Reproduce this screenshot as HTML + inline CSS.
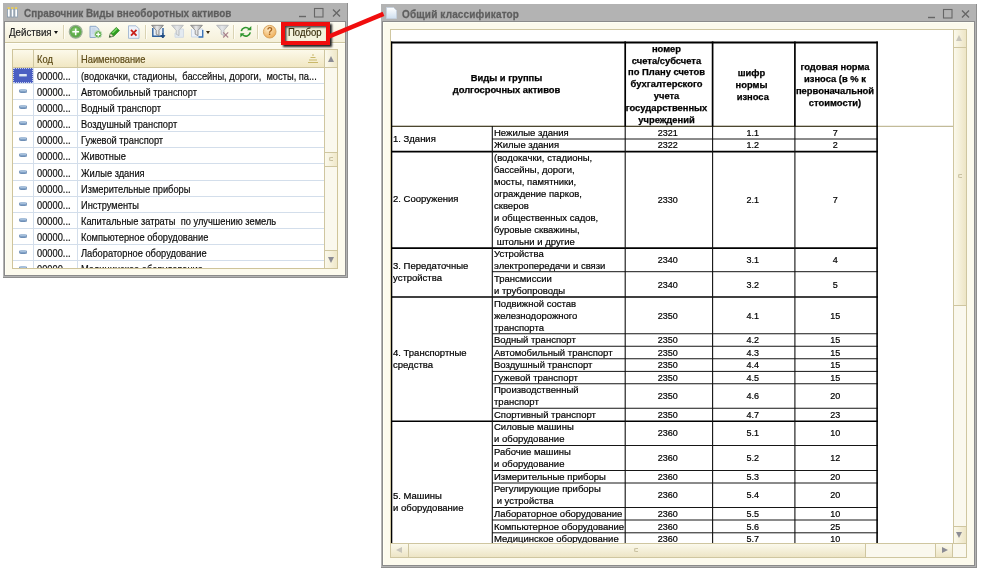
<!DOCTYPE html><html lang="ru"><head><meta charset="utf-8"><title>Общий классификатор</title><style>
*{box-sizing:border-box;margin:0;padding:0}
html,body{width:981px;height:571px;background:#fff;overflow:hidden}
body{position:relative;font-family:"Liberation Sans",sans-serif;font-size:9.3px;color:#000}
.a{position:absolute}
.title{position:absolute;color:#5e5e5e;-webkit-text-stroke:.25px #5e5e5e;font-weight:bold;white-space:nowrap}
.lr{position:absolute;left:0;width:311px;height:16px;border-bottom:1px solid #d3deeb;background:#fff}
.lr span{position:absolute;-webkit-text-stroke:.2px #000;top:1px;line-height:15px;white-space:pre;font-size:11px;color:#111;transform:scaleX(.845);transform-origin:0 50%}
.sx{-webkit-text-stroke:.2px currentColor;transform:scaleX(.845);transform-origin:0 50%;white-space:pre}
.ic{position:absolute;left:6px;top:5px;width:8px;height:4px;border-radius:2px;background:linear-gradient(#b9cfe6,#6f93bd);border:1px solid #6f8fb6;border-top-color:#a7bfda}
.rt{position:absolute;-webkit-text-stroke:.2px #000;font-size:9.5px;line-height:12px;white-space:pre;color:#000}
.hl{position:absolute;background:#222;height:1px}
.vl{position:absolute;background:#222;width:1px}
.hd{position:absolute;-webkit-text-stroke:.25px #000;font-weight:bold;font-size:9.4px;line-height:11.9px;text-align:center;white-space:pre;color:#000}
.num{position:absolute;-webkit-text-stroke:.2px #000;font-size:9px;line-height:12px;text-align:center;white-space:nowrap;color:#000}
.sep{position:absolute;width:1px;background:#dad3b3;top:25px;height:14px;box-shadow:1px 0 0 #fffdf4}
</style></head><body><div id="root" style="position:absolute;left:0;top:0;width:981px;height:571px;will-change:transform">
<div class="a" style="left:3px;top:3px;width:345px;height:275px;background:#b3b3b3;border-right:1px solid #8e8e8e;border-bottom:1px solid #8e8e8e"></div>
<div class="a" style="left:4px;top:21px;width:342px;height:254.500px;background:#fcfaed;border:1px solid #8b8b8b;box-shadow:inset 1px 1px 0 #fffff4"></div>
<svg class="a" style="left:7px;top:7px" width="11" height="11" viewBox="0 0 11 11"><rect x="0.5" y="2" width="2.6" height="8" fill="#fff" stroke="#7d93a8" stroke-width=".7"/><rect x="4.2" y="2" width="2.6" height="8" fill="#fff" stroke="#7d93a8" stroke-width=".7"/><rect x="7.9" y="2" width="2.6" height="8" fill="#fff" stroke="#7d93a8" stroke-width=".7"/><rect x="0.5" y="0.3" width="2.4" height="1.6" fill="#f6d24a"/><rect x="4.2" y="0.3" width="2.4" height="1.6" fill="#f6d24a"/><rect x="7.9" y="0.3" width="2.4" height="1.6" fill="#f6d24a"/></svg>
<div class="title" style="left:24px;top:4.500px;height:17px;line-height:17px;font-size:10px;transform:scale(.99,1.05);transform-origin:0 50%">Справочник Виды внеоборотных активов</div>
<svg class="a" style="left:296px;top:5px" width="48" height="15" viewBox="0 0 48 15"><path d="M3 11.5h7" stroke="#666" stroke-width="1.4" fill="none"/><rect x="18.5" y="3.5" width="8.5" height="8.5" fill="none" stroke="#666" stroke-width="1.1"/><path d="M37 4.5l7 7M44 4.5l-7 7" stroke="#666" stroke-width="1.3" fill="none"/></svg>
<div class="a" style="left:5px;top:22px;width:340px;height:21px;background:linear-gradient(#fdfcf2,#f5f0da);border-bottom:1px solid #cfc7a0;box-shadow:0 1px 0 #fffffa"></div>
<div class="a sx" style="left:9px;top:25px;line-height:14px;font-size:11.3px;color:#222;transform:scaleX(.86)">Действия</div>
<div class="a" style="left:54px;top:30.500px;width:0;height:0;border-left:2.500px solid transparent;border-right:2.500px solid transparent;border-top:3px solid #111"></div>
<div class="sep" style="left:63px"></div>
<div class="sep" style="left:145px"></div>
<div class="sep" style="left:233px"></div>
<div class="sep" style="left:257px"></div>
<svg class="a" width="0" height="0" style="left:0;top:0"><defs><linearGradient id="fg" x1="0" y1="0" x2="1" y2="0"><stop offset="0" stop-color="#8e8e8e"/><stop offset=".45" stop-color="#ececec"/><stop offset="1" stop-color="#9a9a9a"/></linearGradient><linearGradient id="fl" x1="0" y1="0" x2="1" y2="0"><stop offset="0" stop-color="#bfc3c7"/><stop offset=".45" stop-color="#e6e8ea"/><stop offset="1" stop-color="#c3c6c9"/></linearGradient><radialGradient id="gg" cx=".4" cy=".35" r=".75"><stop offset="0" stop-color="#8ccf76"/><stop offset="1" stop-color="#4f9f3b"/></radialGradient><radialGradient id="hg" cx=".4" cy=".3" r=".8"><stop offset="0" stop-color="#fdebc9"/><stop offset="1" stop-color="#eea648"/></radialGradient><linearGradient id="dg" x1="0" y1="0" x2="0" y2="1"><stop offset="0" stop-color="#fff"/><stop offset="1" stop-color="#cfdff0"/></linearGradient></defs></svg>
<svg class="a" style="left:68px;top:24px" width="16" height="16" viewBox="0 0 16 16"><circle cx="7.700" cy="7.800" r="6.400" fill="#62ab4e" stroke="#9caf98" stroke-width="1.200"/><circle cx="7.700" cy="7.800" r="4.600" fill="url(#gg)"/><path d="M7.700 4.400v6.800M4.300 7.800h6.800" stroke="#fff" stroke-width="1.500"/></svg>
<svg class="a" style="left:88px;top:24px" width="16" height="16" viewBox="0 0 16 16"><path d="M2 2.300h6l2.800 2.800v8.400H2z" fill="#d3e1f0" stroke="#8fa9c8" stroke-width="1"/><path d="M3.800 5h3.500M3.800 7h5M3.800 9h3" stroke="#b9c9dc" stroke-width=".8"/><circle cx="10.200" cy="10.300" r="3.700" fill="#63b04f" stroke="#cfe2ca" stroke-width="1"/><path d="M10.200 8.200v4.200M8.100 10.300h4.200" stroke="#fff" stroke-width="1.300"/></svg>
<svg class="a" style="left:108px;top:25px" width="14" height="14" viewBox="0 0 14 14"><path d="M1.300 12.200l1.200-4 5.800-5.800 3.100 3.100-5.800 5.800z" fill="#2f9e20" stroke="#1f7a14" stroke-width=".7"/><path d="M4 7.600l4.600-4.600.9.900-4.600 4.600z" fill="#7fdc68"/><path d="M1.300 12.200l1.200-4 2.900 2.900z" fill="#f3e6c4" stroke="#666" stroke-width=".5"/><path d="M1.300 12.200l.5-1.700 1.200 1.200z" fill="#222"/></svg>
<svg class="a" style="left:127px;top:24px" width="14" height="16" viewBox="0 0 14 16"><path d="M1.500 1.800h7.500l3 3v9.500h-10.500z" fill="#eef3fa" stroke="#a9bcd4" stroke-width="1"/><path d="M4 5.800l5.500 5.800M9.500 5.800l-5.500 5.800" stroke="#c9211a" stroke-width="1.800"/></svg>
<svg class="a" style="left:151px;top:24px" width="16" height="16" viewBox="0 0 16 16"><path d="M1.800 4V12.300H12V4" fill="#e9f0f8" stroke="#2d5f9c" stroke-width="1.400"/><path d="M.600 1.300H12.400L8 6.300V11.600L5.200 10.200V6.300Z" fill="url(#fg)" stroke="#777" stroke-width=".8"/><path d="M11.800 9v3M9.800 11.600h4l-2 2.400z" stroke="#1f4a80" stroke-width="1" fill="#1f4a80"/></svg>
<svg class="a" style="left:171px;top:24px" width="16" height="16" viewBox="0 0 16 16"><path d="M6 5h6.500v8.300H4V9" fill="#e3eaf1" stroke="#d3dbe4" stroke-width="1"/><path d="M.600 1.300H12.400L8 6.300V11.600L5.200 10.200V6.300Z" fill="url(#fl)" stroke="#b4b7ba" stroke-width=".8"/></svg>
<svg class="a" style="left:190px;top:24px" width="16" height="16" viewBox="0 0 16 16"><path d="M1.500 5V13H12.700V5H8" fill="#eef3f9" stroke="#c9d6e6" stroke-width="1"/><path d="M8.500 13H12.700V6" fill="none" stroke="#3c74b8" stroke-width="1.400"/><path d="M.600 1.300H12.400L8 6.300V11.600L5.200 10.200V6.300Z" fill="url(#fg)" stroke="#858585" stroke-width=".8"/></svg>
<div class="a" style="left:205.500px;top:30.500px;width:0;height:0;border-left:2.500px solid transparent;border-right:2.500px solid transparent;border-top:3px solid #3a2a10"></div>
<svg class="a" style="left:216px;top:24px" width="16" height="16" viewBox="0 0 16 16"><path d="M.600 1.300H12.400L8 6.300V11.600L5.200 10.200V6.300Z" fill="url(#fl)" stroke="#b0b3b6" stroke-width=".8"/><path d="M7.200 8.300l5 5.200M12.200 8.300l-5 5.200" stroke="#a8808a" stroke-width="1.100"/></svg>
<svg class="a" style="left:238px;top:24px" width="16" height="16" viewBox="0 0 16 16"><path d="M3.300 7.200a4.500 4.500 0 0 1 7.600-2.400" fill="none" stroke="#2f962f" stroke-width="1.600"/><path d="M12.300 8.400a4.500 4.500 0 0 1-7.600 2.400" fill="none" stroke="#2f962f" stroke-width="1.600"/><path d="M9 6.300h4.300v-4.300z" fill="#2f962f"/><path d="M6.600 9.300h-4.300v4.300z" fill="#2f962f"/></svg>
<svg class="a" style="left:262px;top:24px" width="16" height="16" viewBox="0 0 16 16"><circle cx="7.700" cy="7.700" r="6.300" fill="url(#hg)" stroke="#d9a45e" stroke-width="1"/><text x="7.700" y="11.200" font-family="Liberation Sans, sans-serif" font-weight="bold" font-size="10" text-anchor="middle" fill="#a8641c">?</text></svg>
<div class="a" style="left:281px;top:21.500px;width:49px;height:23.500px;border:4px solid #f00d0d;background:#f4f3dc;box-shadow:1.500px 1.500px 2px #222,inset 1.500px 1.500px 2px #444"></div>
<div class="a sx" style="left:288px;top:25px;line-height:14px;font-size:11.300px;color:#3a300f">Подбор</div>
<div class="a" style="left:12px;top:49px;width:326px;height:220px;background:#fff;border:1px solid #cfc49a;overflow:hidden">
<div class="a" style="left:0;top:0;width:311px;height:18px;background:linear-gradient(#fcf9ea,#f1e7c3);border-bottom:1px solid #cfc6a0"></div>
<div class="a" style="left:20px;top:0;width:1px;height:18px;background:#cfc6a0"></div>
<div class="a" style="left:64px;top:0;width:1px;height:18px;background:#cfc6a0"></div>
<div class="a sx" style="left:23.500px;top:1.500px;line-height:15px;font-size:11px;color:#5c4a16">Код</div>
<div class="a sx" style="left:68px;top:1.500px;line-height:15px;font-size:11px;color:#5c4a16">Наименование</div>
<svg class="a" style="left:294px;top:4px" width="12" height="10" viewBox="0 0 12 10"><path d="M5 1h2M3.500 3.500h5M2 6h8M1 8.500h10" stroke="#c9b86a" stroke-width="1"/></svg>
<div class="lr" style="top:18px">
<div class="a" style="left:0;top:0;width:20px;height:15px;background:#4b5fc2;outline:1px dotted #c8d0f0;outline-offset:-1px"></div><div class="ic" style="height:2px;top:6px;background:#dfe7f6;border:0;box-shadow:0 1px 0 #8a9ed0"></div>
<span style="left:24px">00000...</span><span style="left:68px">(водокачки, стадионы,  бассейны, дороги,  мосты, па...</span></div>
<div class="lr" style="top:34px">
<div class="ic"></div>
<span style="left:24px">00000...</span><span style="left:68px">Автомобильный транспорт</span></div>
<div class="lr" style="top:50px">
<div class="ic"></div>
<span style="left:24px">00000...</span><span style="left:68px">Водный транспорт</span></div>
<div class="lr" style="top:66px">
<div class="ic"></div>
<span style="left:24px">00000...</span><span style="left:68px">Воздушный транспорт</span></div>
<div class="lr" style="top:82px">
<div class="ic"></div>
<span style="left:24px">00000...</span><span style="left:68px">Гужевой транспорт</span></div>
<div class="lr" style="top:98px">
<div class="ic"></div>
<span style="left:24px">00000...</span><span style="left:68px">Животные</span></div>
<div class="lr" style="top:115px">
<div class="ic"></div>
<span style="left:24px">00000...</span><span style="left:68px">Жилые здания</span></div>
<div class="lr" style="top:131px">
<div class="ic"></div>
<span style="left:24px">00000...</span><span style="left:68px">Измерительные приборы</span></div>
<div class="lr" style="top:147px">
<div class="ic"></div>
<span style="left:24px">00000...</span><span style="left:68px">Инструменты</span></div>
<div class="lr" style="top:163px">
<div class="ic"></div>
<span style="left:24px">00000...</span><span style="left:68px">Капитальные затраты  по улучшению земель</span></div>
<div class="lr" style="top:179px">
<div class="ic"></div>
<span style="left:24px">00000...</span><span style="left:68px">Компьютерное оборудование</span></div>
<div class="lr" style="top:195px">
<div class="ic"></div>
<span style="left:24px">00000...</span><span style="left:68px">Лабораторное оборудование</span></div>
<div class="lr" style="top:211px">
<div class="ic"></div>
<span style="left:24px">00000...</span><span style="left:68px">Медицинское оборудование</span></div>
<div class="a" style="left:20px;top:18px;width:1px;height:202px;background:#d3deeb"></div>
<div class="a" style="left:64px;top:18px;width:1px;height:202px;background:#d3deeb"></div>
<div class="a" style="left:311px;top:0;width:14px;height:218px;background:#faf8ee;border-left:1px solid #cfc6a0"></div>
<div class="a" style="left:311px;top:0;width:14px;height:18px;background:linear-gradient(90deg,#fbf9ec,#eee6c6);border:1px solid #cfc6a0;border-top:0;border-right:0"></div>
<div class="a" style="left:315px;top:6px;width:0;height:0;border-left:3px solid transparent;border-right:3px solid transparent;border-bottom:6px solid #8c8c94"></div>
<div class="a" style="left:311px;top:102px;width:14px;height:15px;background:linear-gradient(90deg,#fbf9ec,#efe7c8);border:1px solid #cfc6a0;border-right:0"></div>
<div class="a" style="left:316px;top:107px;width:4px;height:4px;border:1px solid #c9c1a0;border-right:0;border-radius:2px 0 0 2px"></div>
<div class="a" style="left:311px;top:200px;width:14px;height:18px;background:linear-gradient(90deg,#fbf9ec,#eee6c6);border:1px solid #cfc6a0;border-right:0;border-bottom:0"></div>
<div class="a" style="left:315px;top:207px;width:0;height:0;border-left:3px solid transparent;border-right:3px solid transparent;border-top:6px solid #8c8c94"></div>
</div>
<div class="a" style="left:381px;top:4px;width:596px;height:564px;background:#b3b3b3;border-right:1px solid #8e8e8e;border-bottom:1px solid #8e8e8e"></div>
<div class="a" style="left:382px;top:21px;width:593px;height:545px;background:#fcfaed;border:1px solid #8b8b8b;border-left-width:1.500px;box-shadow:inset 1px 1px 0 #fffff4"></div>
<svg class="a" style="left:386px;top:7px" width="11" height="12" viewBox="0 0 11 12"><path d="M.500.500h7l3 3v8h-10z" fill="url(#dg)" stroke="#c4d0e0" stroke-width=".8"/></svg>
<div class="title" style="left:402px;top:5.500px;height:17px;line-height:17px;font-size:10px;letter-spacing:.15px;transform:scaleY(1.050)">Общий классификатор</div>
<svg class="a" style="left:925px;top:6px" width="48" height="15" viewBox="0 0 48 15"><path d="M3 11.500h7" stroke="#666" stroke-width="1.400" fill="none"/><rect x="18.500" y="3.500" width="8.500" height="8.500" fill="none" stroke="#666" stroke-width="1.100"/><path d="M37 4.500l7 7M44 4.500l-7 7" stroke="#666" stroke-width="1.300" fill="none"/></svg>
<div class="a" id="doc" style="left:390px;top:29px;width:564px;height:515px;background:#fff;border:1px solid #cfc6a0;border-right:0;border-bottom:0;overflow:hidden">
<svg class="a" style="left:0;top:0" width="563" height="514" viewBox="391 30 563 514"><path d="M391 126.300H954" stroke="#b3aa80" stroke-width="1"/><path d="M391.00 42.40H877.800" stroke="#000" stroke-width="2.0"/><path d="M391.00 126.30H877.800" stroke="#2e2a14" stroke-width="1.0"/><path d="M492.00 139.00H877.800" stroke="#161616" stroke-width="1.0"/><path d="M391.00 151.60H877.800" stroke="#000" stroke-width="1.6"/><path d="M391.00 248.10H877.800" stroke="#000" stroke-width="1.6"/><path d="M492.00 271.70H877.800" stroke="#161616" stroke-width="1.0"/><path d="M391.00 297.00H877.800" stroke="#000" stroke-width="1.6"/><path d="M492.00 333.75H877.800" stroke="#161616" stroke-width="1.0"/><path d="M492.00 346.25H877.800" stroke="#161616" stroke-width="1.0"/><path d="M492.00 358.75H877.800" stroke="#161616" stroke-width="1.0"/><path d="M492.00 371.40H877.800" stroke="#161616" stroke-width="1.0"/><path d="M492.00 383.75H877.800" stroke="#161616" stroke-width="1.0"/><path d="M492.00 408.25H877.800" stroke="#161616" stroke-width="1.0"/><path d="M391.00 421.30H877.800" stroke="#000" stroke-width="1.6"/><path d="M492.00 445.50H877.800" stroke="#161616" stroke-width="1.0"/><path d="M492.00 470.50H877.800" stroke="#161616" stroke-width="1.0"/><path d="M492.00 483.00H877.800" stroke="#161616" stroke-width="1.0"/><path d="M492.00 507.50H877.800" stroke="#161616" stroke-width="1.0"/><path d="M492.00 520.00H877.800" stroke="#161616" stroke-width="1.0"/><path d="M492.00 532.80H877.800" stroke="#161616" stroke-width="1.0"/><path d="M492.00 545.50H877.800" stroke="#161616" stroke-width="1.0"/><path d="M391.600 41.400V546" stroke="#000" stroke-width="1.400"/><path d="M492.300 126V546" stroke="#111" stroke-width="1.100"/><path d="M625.20 41.400V126.500" stroke="#000" stroke-width="1.700"/><path d="M625.20 126V546" stroke="#111" stroke-width="1.100"/><path d="M712.60 41.400V126.500" stroke="#000" stroke-width="1.700"/><path d="M712.60 126V546" stroke="#111" stroke-width="1.100"/><path d="M794.90 41.400V126.500" stroke="#000" stroke-width="1.700"/><path d="M794.90 126V546" stroke="#111" stroke-width="1.100"/><path d="M877.100 41.400V546" stroke="#000" stroke-width="1.600"/></svg>
<div class="hd" style="left:-1.5px;top:42.1px;width:234.0px">Виды и группы<br>долгосрочных активов</div>
<div class="hd" style="left:232.5px;top:12.6px;width:86.0px">номер<br>счета/субсчета<br>по Плану счетов<br>бухгалтерского<br>учета<br>государственных<br>учреждений</div>
<div class="hd" style="left:319.5px;top:36.7px;width:82.0px">шифр<br>нормы<br> износа</div>
<div class="hd" style="left:403.5px;top:31.2px;width:81.0px">годовая норма<br>износа (в % к<br>первоначальной<br>стоимости)</div>
<div class="rt" style="left:103.0px;top:96.5px">Нежилые здания</div>
<div class="num" style="left:233.8px;top:96.5px;width:86.0px">2321</div>
<div class="num" style="left:320.8px;top:96.5px;width:82.0px">1.1</div>
<div class="num" style="left:403.8px;top:96.5px;width:81.0px">7</div>
<div class="rt" style="left:103.0px;top:109.0px">Жилые здания</div>
<div class="num" style="left:233.8px;top:109.0px;width:86.0px">2322</div>
<div class="num" style="left:320.8px;top:109.0px;width:82.0px">1.2</div>
<div class="num" style="left:403.8px;top:109.0px;width:81.0px">2</div>
<div class="rt" style="left:103.0px;top:121.5px">(водокачки, стадионы,<br>бассейны, дороги,<br>мосты, памятники,<br>ограждение парков,<br>скверов<br>и общественных садов,<br>буровые скважины,<br> штольни и другие</div>
<div class="num" style="left:233.8px;top:163.5px;width:86.0px">2330</div>
<div class="num" style="left:320.8px;top:163.5px;width:82.0px">2.1</div>
<div class="num" style="left:403.8px;top:163.5px;width:81.0px">7</div>
<div class="rt" style="left:103.0px;top:218.0px">Устройства<br>электропередачи и связи</div>
<div class="num" style="left:233.8px;top:224.0px;width:86.0px">2340</div>
<div class="num" style="left:320.8px;top:224.0px;width:82.0px">3.1</div>
<div class="num" style="left:403.8px;top:224.0px;width:81.0px">4</div>
<div class="rt" style="left:103.0px;top:242.5px">Трансмиссии<br>и трубопроводы</div>
<div class="num" style="left:233.8px;top:248.5px;width:86.0px">2340</div>
<div class="num" style="left:320.8px;top:248.5px;width:82.0px">3.2</div>
<div class="num" style="left:403.8px;top:248.5px;width:81.0px">5</div>
<div class="rt" style="left:103.0px;top:267.5px">Подвижной состав<br>железнодорожного<br>транспорта</div>
<div class="num" style="left:233.8px;top:279.5px;width:86.0px">2350</div>
<div class="num" style="left:320.8px;top:279.5px;width:82.0px">4.1</div>
<div class="num" style="left:403.8px;top:279.5px;width:81.0px">15</div>
<div class="rt" style="left:103.0px;top:304.2px">Водный транспорт</div>
<div class="num" style="left:233.8px;top:304.2px;width:86.0px">2350</div>
<div class="num" style="left:320.8px;top:304.2px;width:82.0px">4.2</div>
<div class="num" style="left:403.8px;top:304.2px;width:81.0px">15</div>
<div class="rt" style="left:103.0px;top:316.8px">Автомобильный транспорт</div>
<div class="num" style="left:233.8px;top:316.8px;width:86.0px">2350</div>
<div class="num" style="left:320.8px;top:316.8px;width:82.0px">4.3</div>
<div class="num" style="left:403.8px;top:316.8px;width:81.0px">15</div>
<div class="rt" style="left:103.0px;top:329.2px">Воздушный транспорт</div>
<div class="num" style="left:233.8px;top:329.2px;width:86.0px">2350</div>
<div class="num" style="left:320.8px;top:329.2px;width:82.0px">4.4</div>
<div class="num" style="left:403.8px;top:329.2px;width:81.0px">15</div>
<div class="rt" style="left:103.0px;top:341.8px">Гужевой транспорт</div>
<div class="num" style="left:233.8px;top:341.8px;width:86.0px">2350</div>
<div class="num" style="left:320.8px;top:341.8px;width:82.0px">4.5</div>
<div class="num" style="left:403.8px;top:341.8px;width:81.0px">15</div>
<div class="rt" style="left:103.0px;top:354.2px">Производственный<br>транспорт</div>
<div class="num" style="left:233.8px;top:360.2px;width:86.0px">2350</div>
<div class="num" style="left:320.8px;top:360.2px;width:82.0px">4.6</div>
<div class="num" style="left:403.8px;top:360.2px;width:81.0px">20</div>
<div class="rt" style="left:103.0px;top:378.8px">Спортивный транспорт</div>
<div class="num" style="left:233.8px;top:378.8px;width:86.0px">2350</div>
<div class="num" style="left:320.8px;top:378.8px;width:82.0px">4.7</div>
<div class="num" style="left:403.8px;top:378.8px;width:81.0px">23</div>
<div class="rt" style="left:103.0px;top:391.2px">Силовые машины<br>и оборудование</div>
<div class="num" style="left:233.8px;top:397.2px;width:86.0px">2360</div>
<div class="num" style="left:320.8px;top:397.2px;width:82.0px">5.1</div>
<div class="num" style="left:403.8px;top:397.2px;width:81.0px">10</div>
<div class="rt" style="left:103.0px;top:416.0px">Рабочие машины<br>и оборудование</div>
<div class="num" style="left:233.8px;top:422.0px;width:86.0px">2360</div>
<div class="num" style="left:320.8px;top:422.0px;width:82.0px">5.2</div>
<div class="num" style="left:403.8px;top:422.0px;width:81.0px">12</div>
<div class="rt" style="left:103.0px;top:440.8px">Измерительные приборы</div>
<div class="num" style="left:233.8px;top:440.8px;width:86.0px">2360</div>
<div class="num" style="left:320.8px;top:440.8px;width:82.0px">5.3</div>
<div class="num" style="left:403.8px;top:440.8px;width:81.0px">20</div>
<div class="rt" style="left:103.0px;top:453.2px">Регулирующие приборы<br> и устройства</div>
<div class="num" style="left:233.8px;top:459.2px;width:86.0px">2360</div>
<div class="num" style="left:320.8px;top:459.2px;width:82.0px">5.4</div>
<div class="num" style="left:403.8px;top:459.2px;width:81.0px">20</div>
<div class="rt" style="left:103.0px;top:477.8px">Лабораторное оборудование</div>
<div class="num" style="left:233.8px;top:477.8px;width:86.0px">2360</div>
<div class="num" style="left:320.8px;top:477.8px;width:82.0px">5.5</div>
<div class="num" style="left:403.8px;top:477.8px;width:81.0px">10</div>
<div class="rt" style="left:103.0px;top:490.5px">Компьютерное оборудование</div>
<div class="num" style="left:233.8px;top:490.5px;width:86.0px">2360</div>
<div class="num" style="left:320.8px;top:490.5px;width:82.0px">5.6</div>
<div class="num" style="left:403.8px;top:490.5px;width:81.0px">25</div>
<div class="rt" style="left:103.0px;top:503.2px">Медицинское оборудование</div>
<div class="num" style="left:233.8px;top:503.2px;width:86.0px">2360</div>
<div class="num" style="left:320.8px;top:503.2px;width:82.0px">5.7</div>
<div class="num" style="left:403.8px;top:503.2px;width:81.0px">10</div>
<div class="rt" style="left:2.0px;top:102.5px">1. Здания</div>
<div class="rt" style="left:2.0px;top:163.0px">2. Сооружения</div>
<div class="rt" style="left:2.0px;top:230.0px">3. Передаточные<br>устройства</div>
<div class="rt" style="left:2.0px;top:316.5px">4. Транспортные<br>средства</div>
<div class="rt" style="left:2.0px;top:459.5px">5. Машины<br>и оборудование</div>
</div>
<div class="a" style="left:953px;top:29px;width:14px;height:515px;background:#faf8ee;border:1px solid #cfc6a0;border-bottom:0"></div>
<div class="a" style="left:953px;top:30px;width:14px;height:18px;background:linear-gradient(90deg,#fbf9ec,#ede5c5);border:1px solid #cfc6a0;border-top:0"></div>
<div class="a" style="left:956px;top:35px;width:0;height:0;border-left:3.500px solid transparent;border-right:3.500px solid transparent;border-bottom:6px solid #c9c6bb"></div>
<div class="a" style="left:953px;top:48px;width:14px;height:258px;background:linear-gradient(90deg,#fbf9ec,#ede5c5);border:1px solid #cfc6a0;border-top:0"></div>
<div class="a" style="left:958px;top:174px;width:4px;height:4px;border:1px solid #c9c1a0;border-right:0;border-radius:2px 0 0 2px"></div>
<div class="a" style="left:953px;top:526px;width:14px;height:18px;background:linear-gradient(90deg,#fbf9ec,#ede5c5);border:1px solid #cfc6a0;border-bottom:0"></div>
<div class="a" style="left:956px;top:532px;width:0;height:0;border-left:3.500px solid transparent;border-right:3.500px solid transparent;border-top:6px solid #8c8c94"></div>
<div class="a" style="left:390px;top:543px;width:577px;height:15px;background:#faf8ee;border:1px solid #cfc6a0"></div>
<div class="a" style="left:391px;top:544px;width:18px;height:13px;background:linear-gradient(#fbf9ec,#ede5c5);border-right:1px solid #cfc6a0"></div>
<div class="a" style="left:396px;top:547px;width:0;height:0;border-top:3.500px solid transparent;border-bottom:3.500px solid transparent;border-right:6px solid #c9c6bb"></div>
<div class="a" style="left:409px;top:544px;width:457px;height:13px;background:linear-gradient(#fbf9ec,#ede5c5);border-right:1px solid #cfc6a0"></div>
<div class="a" style="left:634px;top:548px;width:4px;height:4px;border:1px solid #c9c1a0;border-right:0;border-radius:2px 0 0 2px"></div>
<div class="a" style="left:935px;top:544px;width:18px;height:13px;background:linear-gradient(#fbf9ec,#ede5c5);border-left:1px solid #cfc6a0;border-right:1px solid #cfc6a0"></div>
<div class="a" style="left:942px;top:547px;width:0;height:0;border-top:3.500px solid transparent;border-bottom:3.500px solid transparent;border-left:6px solid #8c8c94"></div>
<svg class="a" style="left:325px;top:5px" width="65" height="40" viewBox="0 0 65 40"><path d="M4 31.500L58.500 8.800" stroke="#f00d0d" stroke-width="4.600"/></svg>
</div></body></html>
